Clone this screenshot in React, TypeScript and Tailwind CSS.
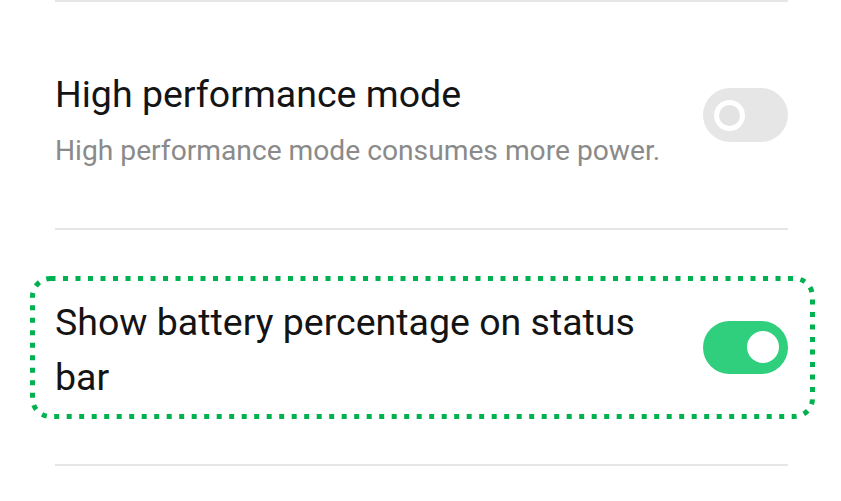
function Toggle({ on }: { on: boolean }) {
  if (on) {
    return (
      <div className="flex h-[53px] w-[85px] shrink-0 items-center justify-end rounded-full bg-[#2fcf7d] pr-[9px]">
        <div className="h-[32px] w-[32px] rounded-full bg-white" />
      </div>
    );
  }
  return (
    <div className="flex h-[54px] w-[85px] shrink-0 items-center rounded-full bg-[#e6e6e6] pl-[11px]">
      <div className="h-[31px] w-[31px] rounded-full border-[5px] border-white bg-[#e3e3e3]" />
    </div>
  );
}

function Divider() {
  return <div className="h-[2px] bg-[#e6e6e6]" />;
}

export default function App() {
  return (
    <div
      className="min-h-screen bg-white"
      style={{ fontFamily: "Roboto, 'Noto Sans', sans-serif" }}
    >
      <div className="ml-[55px] w-[733px]">
        <Divider />

        <div className="flex h-[226px] items-center justify-between">
          <div className="pt-[9px]">
            <div className="text-[37.5px] leading-[46px] text-[#141414]">
              High performance mode
            </div>
            <div className="mt-[17px] text-[28.2px] leading-[34px] text-[#8a8a8a]">
              High performance mode consumes more power.
            </div>
          </div>
          <Toggle on={false} />
        </div>

        <Divider />

        <div className="relative flex h-[234px] items-center justify-between">
          <div className="w-[600px] pt-[6px] text-[37.5px] leading-[55px] text-[#141414]">
            Show battery percentage on status bar
          </div>
          <Toggle on />
          <svg
            className="pointer-events-none absolute left-[-25px] top-[46px]"
            width="785"
            height="143"
            viewBox="0 0 785 143"
          >
            <rect
              x="2.5"
              y="2.5"
              width="780"
              height="138"
              rx="18"
              fill="none"
              stroke="#00b14f"
              strokeWidth="5"
              strokeDasharray="5 7.5"
            />
          </svg>
        </div>

        <Divider />
      </div>
    </div>
  );
}
